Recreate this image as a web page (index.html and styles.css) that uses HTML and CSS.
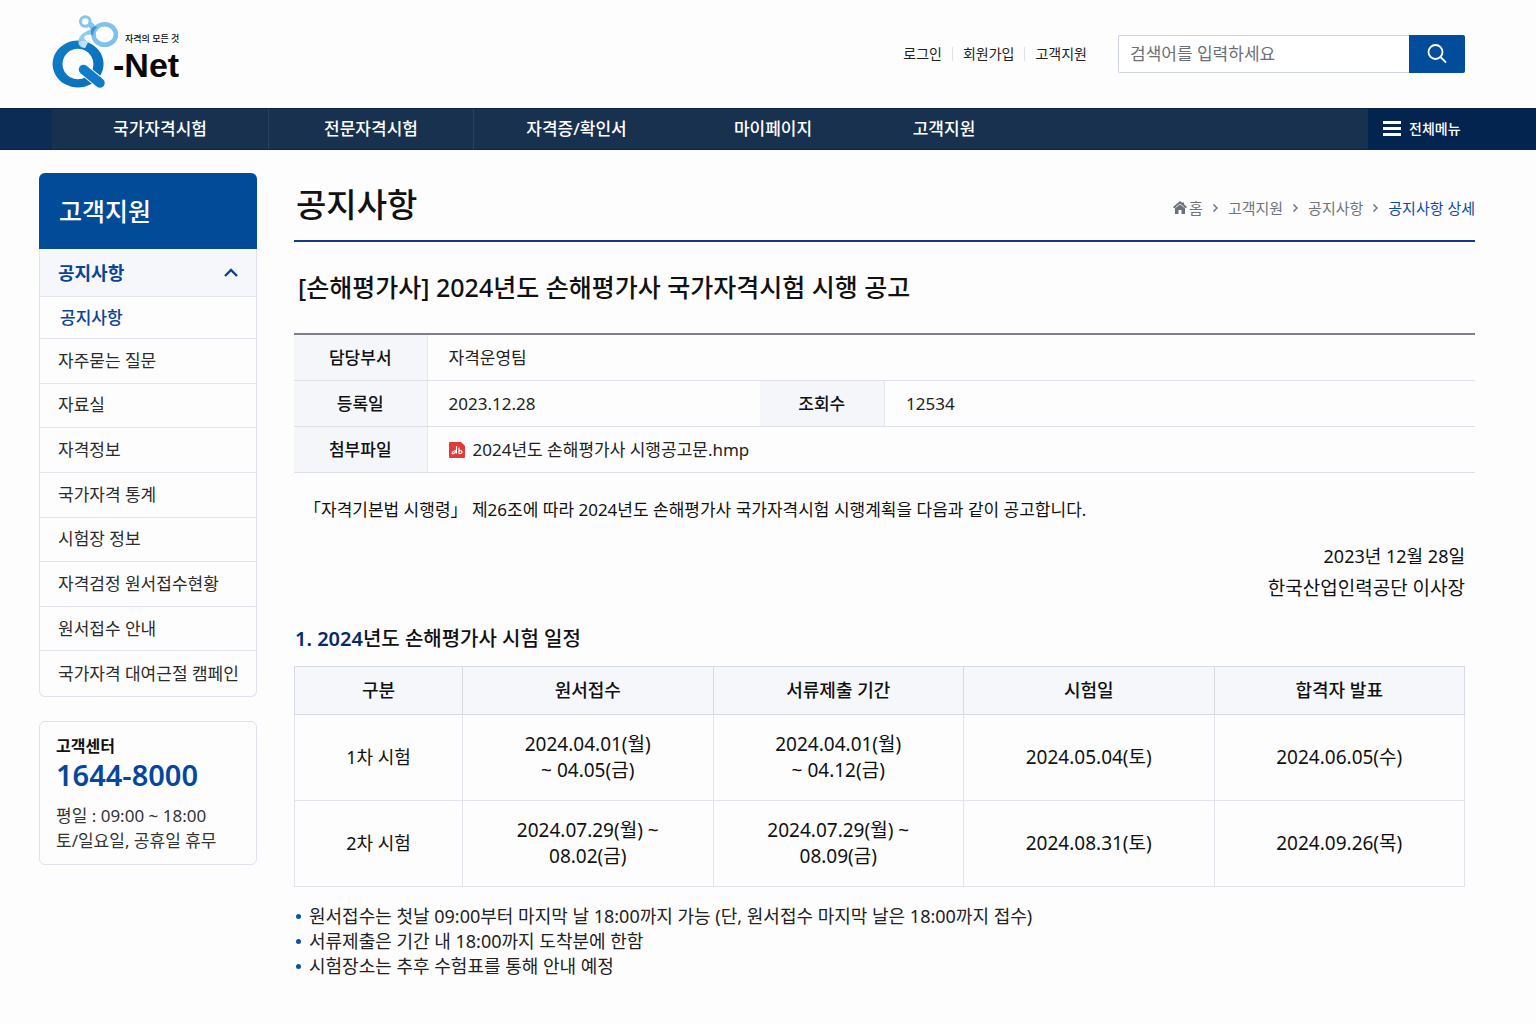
FILE: index.html
```html
<!DOCTYPE html>
<html lang="ko">
<head>
<meta charset="utf-8">
<meta name="viewport" content="width=device-width, initial-scale=1">
<title>공지사항 - Q-Net</title>
<link rel="stylesheet" href="styles.css">
</head>
<body>
<header class="header">
  <a class="logo" href="#" aria-label="Q-Net">
    <svg class="logo-mark" viewBox="0 0 68 76" aria-hidden="true">
      <defs>
        <linearGradient id="ring" x1="0" y1="0" x2="1" y2="1"><stop offset="0" stop-color="#0d7fca"/><stop offset="1" stop-color="#0c6cb8"/></linearGradient>
      </defs>
      <path d="M26 26.500 A25.500 23.500 0 1 0 26.100 26.500 Z M26 34.700 A15.500 15.300 0 1 1 25.900 34.700 Z" fill="url(#ring)" fill-rule="evenodd"/>
      <path d="M31 55 L48 69" stroke="#fdfdfd" stroke-width="11.500" stroke-linecap="round"/>
      <path d="M31.500 55.500 L48 69" stroke="#0f7cc8" stroke-width="9.500" stroke-linecap="round"/>
      <path d="M41 15 Q25 19 26.500 30 Q28 34 33 34 L36 28 Q30 24 33 22 Q36 20 41 21 Z" fill="#8fcaf0"/>
      <path d="M26.500 29 Q31 25 36 28 L33 34 Q29 33 26.500 29 Z" fill="#bfe2f8"/>
      <ellipse cx="33.300" cy="7.500" rx="4.800" ry="4.800" fill="none" stroke="#86c5ee" stroke-width="3"/>
      <path d="M37 7 Q43 9 43 13 L41 18 Q37 14 36 11 Z" fill="#86c5ee"/>
      <ellipse cx="52.700" cy="20.500" rx="11.200" ry="10.300" fill="none" stroke="#7dc1ec" stroke-width="4.600"/>
      <path d="M39 15 Q42 11 45 13 Q41 17 41 22 Q38 20 39 15Z" fill="#3f93cf"/>
    </svg>
    <span class="logo-text"><small>자격의 모든 것</small><b>-Net</b></span>
  </a>
  <div class="header-tools">
    <nav class="util" aria-label="회원 메뉴">
      <a href="#">로그인</a><a href="#">회원가입</a><a href="#">고객지원</a>
    </nav>
    <form class="search">
      <input type="search" placeholder="검색어를 입력하세요" aria-label="검색어">
      <button type="button" aria-label="검색">
        <svg width="22" height="22" viewBox="0 0 22 22" fill="none" stroke="#fff" stroke-width="1.800" stroke-linecap="round"><circle cx="9.500" cy="9" r="7"/><path d="M14.500 14 L19.500 19"/></svg>
      </button>
    </form>
  </div>
</header>
<nav class="gnb" aria-label="주 메뉴">
  <ul>
    <li><a href="#">국가자격시험</a></li>
    <li><a href="#">전문자격시험</a></li>
    <li><a href="#">자격증/확인서</a></li>
    <li><a href="#">마이페이지</a></li>
    <li><a href="#">고객지원</a></li>
  </ul>
  <button class="all-menu" type="button">
    <svg width="18" height="16" viewBox="0 0 18 16" fill="#fff" aria-hidden="true"><path d="M0 0h18v3H0zM0 6h18v3H0zM0 12h18v3H0z"/></svg>
    전체메뉴
  </button>
</nav>
<div class="layout">
  <aside class="side">
    <nav class="lnb" aria-label="고객지원 메뉴">
      <h2>고객지원</h2>
      <ul>
        <li class="open"><a href="#">공지사항
          <svg width="14" height="10" viewBox="0 0 14 10" fill="none" stroke="#0a4398" stroke-width="2.400" aria-hidden="true"><path d="M1 8 L7 2 L13 8"/></svg></a></li>
        <li class="current"><a href="#">공지사항</a></li>
        <li><a href="#">자주묻는 질문</a></li>
        <li><a href="#">자료실</a></li>
        <li><a href="#">자격정보</a></li>
        <li><a href="#">국가자격 통계</a></li>
        <li><a href="#">시험장 정보</a></li>
        <li><a href="#">자격검정 원서접수현황</a></li>
        <li><a href="#">원서접수 안내</a></li>
        <li><a href="#">국가자격 대여근절 캠페인</a></li>
      </ul>
    </nav>
    <section class="center">
      <h3>고객센터</h3>
      <strong>1644-8000</strong>
      <p>평일 : 09:00 ~ 18:00<br>토/일요일, 공휴일 휴무</p>
    </section>
  </aside>
  <main class="main">
    <div class="page-head">
      <h1>공지사항</h1>
      <nav class="crumbs" aria-label="현재 위치">
        <a class="home" href="#"><svg width="14" height="13" viewBox="0 0 14 13" fill="#6b717b" aria-hidden="true"><path d="M7 0 L9 1.500 L11 1.500 V3.200 L14 6 L13 7 H12 V13 H8.500 V9 H5.500 V13 H2 V7 H1 L0 6 Z"/><path d="M2.500 6.500 L7 3 L11.500 6.500" stroke="#fdfdfd" stroke-width=".8" fill="none"/></svg>홈</a>
        <svg class="sep" width="5" height="8" viewBox="0 0 5 8"><path d="M0.500 0.500 L4 4 L0.500 7.500"/></svg>
        <a href="#">고객지원</a>
        <svg class="sep" width="5" height="8" viewBox="0 0 5 8"><path d="M0.500 0.500 L4 4 L0.500 7.500"/></svg>
        <a href="#">공지사항</a>
        <svg class="sep" width="5" height="8" viewBox="0 0 5 8"><path d="M0.500 0.500 L4 4 L0.500 7.500"/></svg>
        <a class="here" href="#" aria-current="page">공지사항 상세</a>
      </nav>
    </div>
    <article>
      <h2 class="title">[손해평가사] 2024년도 손해평가사 국가자격시험 시행 공고</h2>
      <table class="info">
        <colgroup><col class="c-label"><col><col class="c-label2"><col class="c-last"></colgroup>
        <tr><th scope="row">담당부서</th><td colspan="3">자격운영팀</td></tr>
        <tr><th scope="row">등록일</th><td>2023.12.28</td><th scope="row">조회수</th><td>12534</td></tr>
        <tr><th scope="row">첨부파일</th><td colspan="3"><a class="file" href="#"><svg width="16" height="16" viewBox="0 0 16 16" aria-hidden="true"><path d="M1 0 H12 L16 4 V15 Q16 16 15 16 H1 Q0 16 0 15 V1 Q0 0 1 0Z" fill="#e03b36"/><path d="M7.500 4 V11.500 M7.500 8.500 Q3 9 3 11.500 Q5.500 12.500 7.500 8.500 M10 5.500 V11.500 Q13 12 13 9.800 Q12.500 8 10 9" fill="none" stroke="#fff" stroke-width="1.100"/></svg>2024년도 손해평가사 시행공고문.hmp</a></td></tr>
      </table>
      <div class="body">
        <p class="lead">「자격기본법 시행령」 제26조에 따라 2024년도 손해평가사 국가자격시험 시행계획을 다음과 같이 공고합니다.</p>
        <p class="sign">2023년 12월 28일<br><span>한국산업인력공단 이사장</span></p>
        <h3><span>1. 2024</span>년도 손해평가사 시험 일정</h3>
        <table class="schedule">
          <colgroup><col class="c-kind"><col><col><col><col></colgroup>
          <thead><tr><th scope="col">구분</th><th scope="col">원서접수</th><th scope="col">서류제출 기간</th><th scope="col">시험일</th><th scope="col">합격자 발표</th></tr></thead>
          <tbody>
            <tr><th scope="row">1차 시험</th><td>2024.04.01(월)<br>~ 04.05(금)</td><td>2024.04.01(월)<br>~ 04.12(금)</td><td>2024.05.04(토)</td><td>2024.06.05(수)</td></tr>
            <tr><th scope="row">2차 시험</th><td>2024.07.29(월) ~<br>08.02(금)</td><td>2024.07.29(월) ~<br>08.09(금)</td><td>2024.08.31(토)</td><td>2024.09.26(목)</td></tr>
          </tbody>
        </table>
        <ul class="notes">
          <li>원서접수는 첫날 09:00부터 마지막 날 18:00까지 가능 (단, 원서접수 마지막 날은 18:00까지 접수)</li>
          <li>서류제출은 기간 내 18:00까지 도착분에 한함</li>
          <li>시험장소는 추후 수험표를 통해 안내 예정</li>
        </ul>
      </div>
    </article>
  </main>
</div>
</body>
</html>
```
FILE: styles.css
```css
* { box-sizing: border-box; }
body {
  margin: 0;
  background: #fdfdfd;
  color: #111;
  font-family: "Noto Sans", "Noto Sans CJK KR", sans-serif;
  font-size: 17px;
  line-height: 24px;
}
h1, h2, h3, p, ul { margin: 0; padding: 0; }
ul { list-style: none; }
a { color: inherit; text-decoration: none; }
button { font: inherit; border: 0; padding: 0; cursor: pointer; }
svg { flex: none; }
table { width: 100%; border-collapse: collapse; table-layout: fixed; }

/* Header */
.header {
  display: flex;
  justify-content: space-between;
  align-items: center;
  height: 108px;
  padding: 0 71px 0 52px;
}
.logo { display: flex; align-items: flex-end; height: 76px; margin-bottom: 4px; }
.logo-mark { width: 68px; height: 76px; }
.logo-text { display: flex; flex-direction: column; margin-left: -7px; padding-bottom: 5px; color: #080808; }
.logo-text small { padding-left: 12px; font-size: 9px; line-height: 12px; font-weight: 500; }
.logo-text b { font: bold 34px/40px "Liberation Sans", sans-serif; }
.header-tools { display: flex; align-items: center; gap: 31px; }
.util { display: flex; font-size: 14px; color: #222; }
.util a { display: flex; align-items: center; }
.util a + a::before { content: ""; width: 1px; height: 14px; margin: 0 10px; background: #dfe1e6; }
.search { display: flex; width: 347px; height: 38px; }
.search input {
  flex: 1;
  min-width: 0;
  padding: 0 11px;
  border: 1px solid #cfd5e0;
  border-right: 0;
  border-radius: 2px 0 0 2px;
  background: #fff;
  font: inherit;
}
.search input::placeholder { color: #6b6f76; opacity: 1; }
.search button {
  display: grid;
  place-items: center;
  width: 56px;
  background: #024c9c;
  border-radius: 0 2px 2px 0;
}

/* Main navigation */
.gnb {
  display: flex;
  justify-content: space-between;
  height: 42px;
  padding-left: 52px;
  background: linear-gradient(to right, #0d2c55 52px, #18314f 52px);
  border-top: 1px solid #0b2447;
  border-bottom: 1px solid #0b2447;
  color: #fff;
}
.gnb ul { display: flex; }
.gnb li { width: 205px; border-right: 1px solid #29425f; }
.gnb li:first-child { width: 217px; }
.gnb li:nth-child(n+3) { border-right: 0; }
.gnb li:nth-child(4) { width: 188px; }
.gnb li:nth-child(5) { width: 154px; }
.gnb a { display: grid; place-items: center; height: 100%; font-weight: 500; }
.all-menu {
  display: flex;
  align-items: center;
  gap: 8px;
  width: 168px;
  padding-left: 15px;
  background: #03244f;
  color: #fff;
  font-size: 14px;
  font-weight: 500;
}

/* Page columns */
.layout {
  display: grid;
  grid-template-columns: 218px minmax(0, 1fr);
  gap: 37px;
  padding: 23px 61px 44px 39px;
}

/* Side menu */
.side { display: flex; flex-direction: column; gap: 24px; }
.lnb { border: 1px solid #dfe2ea; border-top: 0; border-radius: 6px; color: #2b2b2b; }
.lnb h2 {
  margin: 0 -1px;
  padding: 0 20px;
  border-radius: 6px 6px 0 0;
  background: #024b99;
  color: #fff;
  font-size: 25px;
  line-height: 76px;
  font-weight: 500;
}
.lnb ul {
  display: grid;
  grid-template-columns: minmax(0, 1fr);
  grid-template-rows: 48px 42px repeat(8, 1fr);
  height: 447px;
}
.lnb li { border-bottom: 1px solid #e3e6ed; }
.lnb li:last-child { border-bottom: 0; }
.lnb a { display: flex; align-items: center; justify-content: space-between; height: 100%; padding: 0 18px; white-space: nowrap; }
.lnb .open { background: #f5f7fb; color: #0a4398; font-size: 18px; font-weight: 700; }
.lnb .current { color: #0a4398; font-weight: 500; }
.lnb .current a { padding-left: 20px; }
.center { padding: 12px 16px 11px; border: 1px solid #dfe2ea; border-radius: 6px; }
.center h3 { font-size: 16px; line-height: 24px; font-weight: 700; }
.center strong { display: block; color: #0546a0; font-size: 29px; line-height: 34px; font-weight: 600; }
.center p { margin-top: 11px; color: #333; line-height: 25px; }

/* Page heading */
.page-head {
  display: flex;
  justify-content: space-between;
  align-items: center;
  height: 69px;
  border-bottom: 2px solid #123a8c;
}
.page-head h1 { padding: 0 0 4px 2px; font-size: 33px; line-height: 44px; font-weight: 500; }
.crumbs { display: flex; align-items: center; gap: 10px; padding-top: 2px; font-size: 15px; color: #70747c; }
.crumbs .home { display: flex; align-items: center; gap: 2px; }
.crumbs .here { color: #0a4ca5; }
.sep { fill: none; stroke: #70747c; stroke-width: 1.5; }

/* Notice */
.title { padding: 29px 0 29px 4px; font-size: 25px; line-height: 33px; font-weight: 500; }
.info { border-top: 2px solid #7a7f89; }
.info th, .info td { height: 46px; padding: 2px 0 0; border-bottom: 1px solid #dde0e7; }
.info th { background: #f4f6f9; border-right: 1px solid #e3e6ec; font-weight: 500; }
.info td { padding-left: 21px; color: #222; }
.c-label { width: 133px; }
.c-label2 { width: 125px; }
.c-last { width: 50%; }
.file { display: flex; align-items: center; gap: 8px; }
.body { padding-right: 10px; }
.lead { padding: 25px 0 0 10px; }
.sign { padding-top: 18px; text-align: right; font-size: 18px; line-height: 32px; }
.sign span { font-size: 19px; }
.body h3 { padding: 20px 0 12px 1px; font-size: 20px; line-height: 30px; font-weight: 500; }
.body h3 span { color: #06296b; font-weight: 600; }

/* Schedule */
.c-kind { width: 168px; }
.schedule { text-align: center; font-size: 19px; line-height: 26px; }
.schedule th, .schedule td { height: 86px; padding: 0; border: 1px solid #e1e4ea; }
.schedule th { font-size: 18px; }
.schedule thead th { height: 48px; background: #f5f7fa; border-color: #d6dae2; font-weight: 500; }
.schedule tbody th { font-weight: 400; }
.notes { padding-top: 17px; color: #222; font-size: 18px; }
.notes li { display: flex; align-items: center; gap: 8px; padding-left: 2px; line-height: 25px; }
.notes li::before { content: ""; width: 5px; height: 5px; border-radius: 50%; background: #0a50a8; }
```
